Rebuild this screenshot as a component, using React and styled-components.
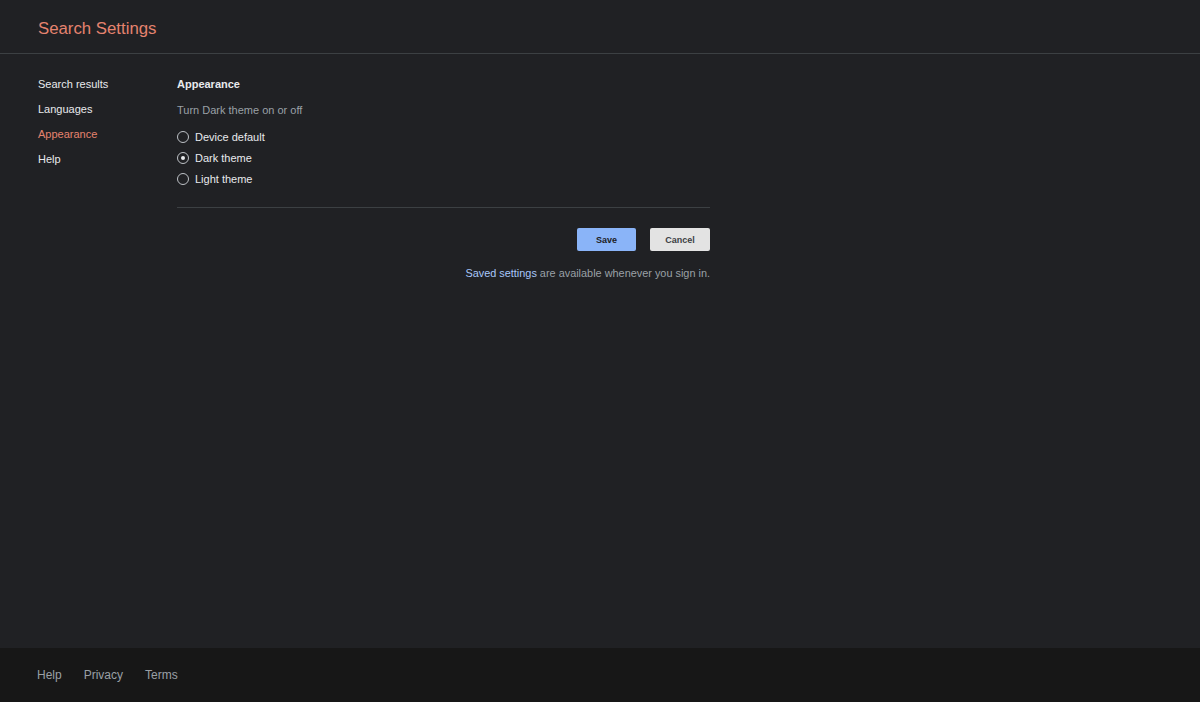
import React, { useState } from "react";
import styled, { createGlobalStyle } from "styled-components";

const GlobalStyle = createGlobalStyle`
  html, body {
    margin: 0;
    padding: 0;
    background: #202124;
    font-family: "Liberation Sans", Arial, sans-serif;
  }
  #root {
    min-height: 702px;
  }
`;

const Page = styled.div`
  display: flex;
  flex-direction: column;
  height: 702px;
  background: #202124;
`;

const Header = styled.header`
  height: 54px;
  border-bottom: 1px solid #3c4043;
  display: flex;
  align-items: center;
  padding-left: 38px;
  box-sizing: border-box;
  flex-shrink: 0;
`;

const Title = styled.h1`
  margin: 0;
  font-size: 16.8px;
  font-weight: 400;
  color: #e5836f;
  padding-top: 4px;
`;

const Body = styled.main`
  flex: 1;
  display: flex;
  padding: 18px 0 0 38px;
`;

const Sidebar = styled.nav`
  width: 139px;
  display: flex;
  flex-direction: column;
`;

const NavItem = styled.a`
  font-size: 11px;
  line-height: 25px;
  color: ${({ $active }) => ($active ? "#e5836f" : "#e8eaed")};
  cursor: pointer;
`;

const Content = styled.section`
  width: 533px;
  display: flex;
  flex-direction: column;
`;

const Heading = styled.h2`
  margin: 0;
  font-size: 11px;
  line-height: 25px;
  font-weight: 700;
  color: #e8eaed;
`;

const Subtitle = styled.p`
  margin: 0;
  font-size: 11px;
  line-height: 26px;
  color: #9aa0a6;
`;

const RadioList = styled.div`
  display: flex;
  flex-direction: column;
  padding-top: 3px;
`;

const RadioRow = styled.label`
  display: flex;
  align-items: center;
  gap: 6px;
  height: 21px;
  font-size: 11px;
  color: #e8eaed;
  cursor: pointer;
`;

const RadioCircle = styled.span`
  width: 10px;
  height: 10px;
  border: 1px solid #bdc1c6;
  border-radius: 50%;
  display: flex;
  align-items: center;
  justify-content: center;
  &::after {
    content: "";
    width: 4px;
    height: 4px;
    border-radius: 50%;
    background: ${({ $checked }) => ($checked ? "#e8eaed" : "transparent")};
  }
`;

const Divider = styled.hr`
  margin: 18px 0 0;
  border: none;
  border-top: 1px solid #3c4043;
`;

const Actions = styled.div`
  display: flex;
  justify-content: flex-end;
  gap: 14px;
  margin-top: 20px;
`;

const Button = styled.button`
  height: 23px;
  width: ${({ $width }) => $width}px;
  border: none;
  border-radius: 2px;
  font-family: "Liberation Sans", Arial, sans-serif;
  font-size: 9px;
  font-weight: 700;
  color: ${({ $primary }) => ($primary ? "#202124" : "#3c4043")};
  background: ${({ $primary }) => ($primary ? "#8ab4f8" : "#e3e3e3")};
  cursor: pointer;
`;

const Note = styled.p`
  margin: 16px 0 0;
  text-align: right;
  font-size: 10.9px;
  color: #9aa0a6;
`;

const NoteLink = styled.a`
  color: #a8c7fa;
  cursor: pointer;
`;

const Footer = styled.footer`
  height: 54px;
  background: #171717;
  display: flex;
  align-items: center;
  gap: 22px;
  padding-left: 37px;
  flex-shrink: 0;
`;

const FooterLink = styled.a`
  font-size: 12px;
  color: #9aa0a6;
  cursor: pointer;
`;

const options = ["Device default", "Dark theme", "Light theme"];

export default function App() {
  const [theme, setTheme] = useState("Dark theme");
  return (
    <>
      <GlobalStyle />
      <Page>
        <Header>
          <Title>Search Settings</Title>
        </Header>
        <Body>
          <Sidebar>
            <NavItem>Search results</NavItem>
            <NavItem>Languages</NavItem>
            <NavItem $active>Appearance</NavItem>
            <NavItem>Help</NavItem>
          </Sidebar>
          <Content>
            <Heading>Appearance</Heading>
            <Subtitle>Turn Dark theme on or off</Subtitle>
            <RadioList>
              {options.map((o) => (
                <RadioRow key={o} onClick={() => setTheme(o)}>
                  <RadioCircle $checked={theme === o} />
                  {o}
                </RadioRow>
              ))}
            </RadioList>
            <Divider />
            <Actions>
              <Button $primary $width={59}>Save</Button>
              <Button $width={60}>Cancel</Button>
            </Actions>
            <Note>
              <NoteLink>Saved settings</NoteLink> are available whenever you sign in.
            </Note>
          </Content>
        </Body>
        <Footer>
          <FooterLink>Help</FooterLink>
          <FooterLink>Privacy</FooterLink>
          <FooterLink>Terms</FooterLink>
        </Footer>
      </Page>
    </>
  );
}
